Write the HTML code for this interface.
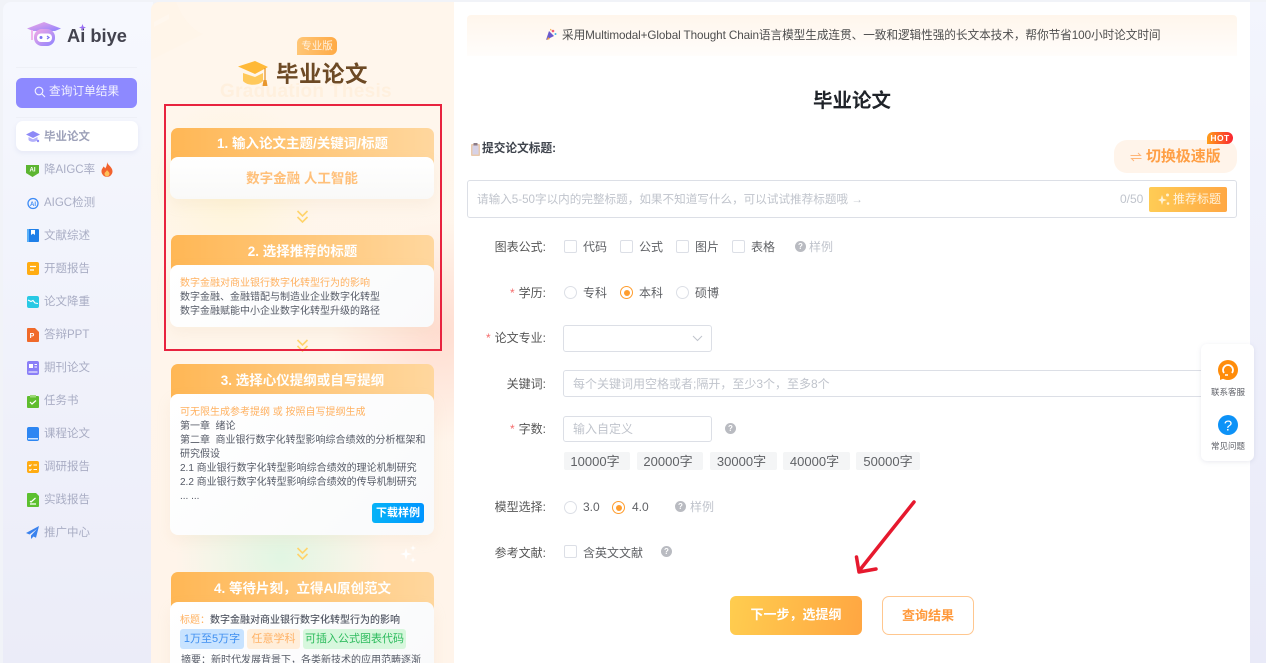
<!DOCTYPE html>
<html lang="zh"><head><meta charset="utf-8"><title>毕业论文</title>
<style>
*{box-sizing:border-box;margin:0;padding:0}
html,body{width:1266px;height:663px;overflow:hidden;background:#f1f3f8}
body{position:relative;font-family:"Liberation Sans","Noto Sans CJK SC",sans-serif;color:#555;filter:blur(.3px)}
.a{position:absolute;white-space:nowrap}
#side{position:absolute;left:3px;top:2px;width:150px;height:670px;border-radius:8px 0 0 0;background:linear-gradient(180deg,#f6f8fe,#ebecf8)}
.nav{position:absolute;left:44px;font-size:11.5px;line-height:16px;color:#a9adc4;white-space:nowrap;margin-top:1px}
#story{position:absolute;left:151px;top:2px;width:303px;height:661px;overflow:hidden;border-radius:8px 0 0 0;background:
 radial-gradient(circle at 80px 190px,rgba(255,244,200,.55),transparent 90px),
 radial-gradient(circle at 290px 330px,rgba(255,213,200,.75),transparent 110px),
 radial-gradient(circle at 130px 555px,rgba(222,246,226,.9),transparent 105px),
 linear-gradient(180deg,#fff6ec,#fff4ea)}
.head{position:absolute;left:20px;width:263px;height:50px;border-radius:7px 7px 0 0;background:linear-gradient(90deg,#ffb755,#ffd79e);color:#fff;font-size:13.5px;font-weight:700;text-align:center;line-height:34px;white-space:nowrap}
.card{position:absolute;left:19px;width:264px;border-radius:8px;background:linear-gradient(135deg,#fff,#f9fafb);box-shadow:0 6px 14px rgba(220,190,150,.13);font-size:10px;line-height:14px;color:#555a66;padding:0 10px;white-space:nowrap}
.or{color:#ffb160}
.chev{position:absolute;left:145px}
.lab{position:absolute;right:720px;font-size:12px;line-height:16px;color:#555;white-space:nowrap}
.lab i{font-style:normal;color:#f56c6c;margin-right:4px}
.cb{position:absolute;width:13px;height:13px;border:1px solid #dcdfe6;border-radius:2px;background:#fff}
.rd{position:absolute;width:13px;height:13px;border:1px solid #dcdfe6;border-radius:50%;background:#fff}
.rd.on{border-color:#ff9d2e}
.rd.on:after{content:"";position:absolute;left:2.5px;top:2.5px;width:6px;height:6px;border-radius:50%;background:#ff9d2e}
.t{position:absolute;font-size:12px;line-height:16px;color:#606266;white-space:nowrap}
.q{position:absolute;width:11px;height:11px;border-radius:50%;background:#b9bbc1;color:#fff;font-size:8px;font-weight:700;line-height:11px;text-align:center}
.box{position:absolute;background:#fff;border:1px solid #dcdfe6;border-radius:3px}
.ph{color:#c0c4cc}
.chip{position:absolute;top:452px;width:67px;height:18px;background:#f4f5f6;border-radius:2px;font-size:13px;line-height:19px;text-align:center;color:#606266;padding-right:4px}
</style></head><body>

<div id="side"></div>
<svg class="a" style="left:26px;top:21px" width="36" height="27" viewBox="0 0 36 27"><defs><linearGradient id="lg" x1="0" y1="0" x2="1" y2="1"><stop offset="0" stop-color="#f4a9e4"/><stop offset="1" stop-color="#8d82ff"/></linearGradient></defs><path d="M1 7.500 18 1l17 6.500-6 2.500H7z" fill="url(#lg)"/><rect x="5" y="9" width="2" height="10" fill="#f0b5ee"/><rect x="8" y="8" width="21" height="17" rx="8" fill="url(#lg)"/><rect x="11" y="12.500" width="15" height="8.500" rx="4" fill="#fff"/><circle cx="15" cy="16.500" r="1.500" fill="#7c73f4"/><path d="M21 15l2 1.500-2 1.500" stroke="#7c73f4" fill="none" stroke-width="1.200"/></svg>
<div class="a" style="left:67px;top:24px;font-size:18.3px;line-height:24px;font-weight:700;color:#43434f">Ai biye</div>
<svg class="a" style="left:79px;top:24px" width="7" height="7" viewBox="0 0 7 7"><path d="M3.500 0 4.400 2.600 7 3.500 4.400 4.400 3.500 7 2.600 4.400 0 3.500 2.600 2.600z" fill="#9a6ff5"/></svg>
<div class="a" style="left:16px;top:67px;width:121px;height:1px;background:#eef0f7"></div>
<div class="a" style="left:16px;top:78px;width:121px;height:30px;border-radius:6px;background:#8d89ff;color:#f3f3ff;font-size:11.7px;line-height:28px;padding-left:33px">查询订单结果</div>
<svg class="a" style="left:34px;top:86px" width="12" height="12" viewBox="0 0 12 12" fill="none" stroke="#f3f3ff" stroke-width="1.100"><circle cx="5" cy="5" r="3.800"/><path d="M8 8l3 3"/></svg>
<div class="a" style="left:16px;top:117px;width:121px;height:1px;background:#eef0f7"></div>
<div class="a" style="left:16px;top:121px;width:122px;height:30px;border-radius:7px;background:#fff;box-shadow:0 2px 5px rgba(160,165,210,.16)"></div>

<svg class="a" style="left:26px;top:130px" width="14" height="13" viewBox="0 0 14 13"><path d="M0 4.500 7 1l7 3.500-7 3.500z" fill="#8d89f7"/><path d="M2.500 7v3c2 2.500 7 2.500 9 0V7L7 9.200z" fill="#b3b0fa"/><circle cx="12" cy="11" r="1.200" fill="#8d89f7"/></svg>
<div class="nav" style="top:128px;font-weight:700;color:#9da1b9">毕业论文</div>

<svg class="a" style="left:26px;top:164px" width="13" height="13" viewBox="0 0 13 13"><path d="M0 1h13v8l-6.500 4L0 9z" fill="#5cb531"/><text x="6.500" y="7.500" font-size="6" font-weight="700" fill="#fff" text-anchor="middle" font-family="Liberation Sans">AI</text></svg>
<div class="nav" style="top:161px">降AIGC率</div>
<svg class="a" style="left:101px;top:162px" width="12" height="15" viewBox="0 0 12 15"><path d="M6 0c.5 3 5.500 5 5.500 9.300A5.500 5.500 0 0 1 .5 9.300C.5 7 2 6 2.500 4.500 3.500 5 4 6 4 6.500 5.500 5 6.200 2.500 6 0z" fill="#f2622d"/><path d="M6 8c.5 1 2.500 2 2.500 3.800a2.500 2.500 0 0 1-5 0C3.500 10.500 5.500 9.500 6 8z" fill="#ffc05a"/></svg>

<svg class="a" style="left:27px;top:197px" width="12" height="13" viewBox="0 0 12 13"><circle cx="6" cy="6.500" r="5" fill="none" stroke="#3d8bf5" stroke-width="1.300"/><text x="6" y="9" font-size="6" font-weight="700" fill="#3d8bf5" text-anchor="middle" font-family="Liberation Sans">AI</text></svg>
<div class="nav" style="top:194px">AIGC检测</div>

<svg class="a" style="left:27px;top:229px" width="12" height="13" viewBox="0 0 12 13"><rect width="12" height="13" rx="1" fill="#1f7fe8"/><rect x="0" width="2" height="13" fill="#5ab0f8"/><path d="M4 1h4v5L6 4.600 4 6z" fill="#fff"/></svg>
<div class="nav" style="top:227px">文献综述</div>

<svg class="a" style="left:27px;top:262px" width="12" height="13" viewBox="0 0 12 13"><rect width="12" height="13" rx="2" fill="#ffac12"/><path d="M3 4.500h6M3 8h4" stroke="#fff" stroke-width="1.300"/></svg>
<div class="nav" style="top:260px">开题报告</div>

<svg class="a" style="left:27px;top:296px" width="12" height="12" viewBox="0 0 12 12"><rect width="12" height="12" rx="2" fill="#28c9e4"/><path d="M1 4l3 1.500 2-1 2 2.500 3 .5" stroke="#fff" fill="none" stroke-width="1.100"/></svg>
<div class="nav" style="top:293px">论文降重</div>

<svg class="a" style="left:27px;top:328px" width="12" height="14" viewBox="0 0 12 14"><path d="M1 0h7l4 4v9a1 1 0 0 1-1 1H1a1 1 0 0 1-1-1V1a1 1 0 0 1 1-1z" fill="#f06a2a"/><text x="5" y="10" font-size="7" font-weight="700" fill="#fff" text-anchor="middle" font-family="Liberation Sans">P</text></svg>
<div class="nav" style="top:326px">答辩PPT</div>

<svg class="a" style="left:27px;top:361px" width="12" height="14" viewBox="0 0 12 14"><rect width="12" height="14" rx="2" fill="#8a7ff7"/><rect x="2" y="3" width="4" height="4" fill="#fff"/><path d="M7.500 3.500H10M7.500 6H10M1.500 11h9" stroke="#fff" stroke-width="1"/></svg>
<div class="nav" style="top:359px">期刊论文</div>

<svg class="a" style="left:27px;top:395px" width="12" height="13" viewBox="0 0 12 13"><rect y="1" width="12" height="12" rx="1" fill="#5fbd2e"/><rect x="3" width="6" height="2.500" fill="#9ed978"/><path d="M3 7l2 2 4-3.500" stroke="#fff" fill="none" stroke-width="1.200"/></svg>
<div class="nav" style="top:392px">任务书</div>

<svg class="a" style="left:27px;top:427px" width="12" height="14" viewBox="0 0 12 14"><rect width="12" height="14" rx="2" fill="#2d86f2"/><rect x="1" y="11" width="10" height="1.500" fill="#cfe5ff"/></svg>
<div class="nav" style="top:425px">课程论文</div>

<svg class="a" style="left:27px;top:461px" width="12" height="12" viewBox="0 0 12 12"><rect width="12" height="12" rx="2" fill="#ffac12"/><path d="M2 4l1 1 1.500-1.500M2 8.500l1 1 1.500-1.500M6.500 4H10M6.500 8.500H10" stroke="#fff" fill="none"/></svg>
<div class="nav" style="top:458px">调研报告</div>

<svg class="a" style="left:27px;top:493px" width="12" height="14" viewBox="0 0 12 14"><path d="M1 0h8l3 3v10a1 1 0 0 1-1 1H1a1 1 0 0 1-1-1V1a1 1 0 0 1 1-1z" fill="#5cc02f"/><path d="M3 8l1 1 4.500-4M3 11h6" stroke="#fff" fill="none" stroke-width="1.200"/></svg>
<div class="nav" style="top:491px">实践报告</div>

<svg class="a" style="left:26px;top:526px" width="13" height="13" viewBox="0 0 13 13"><path d="M13 0 0 7l3.500 1.500L11 3 5 9.500V13l2.500-2.500 2.500 1.200z" fill="#3a82ee"/></svg>
<div class="nav" style="top:524px">推广中心</div>

<div id="story">
  <svg class="a" style="left:0;top:0" width="60" height="60" viewBox="0 0 60 60"><path d="M0 8Q0 0 8 0H25Q35 25 52 32L0 58z" fill="#fff1e2" opacity=".3"/><path d="M3 20 18 12v5L3 25z" fill="#fff" opacity=".25"/></svg>
  <div class="a" style="left:146px;top:35px;width:40px;height:18px;border-radius:6px 6px 6px 0;background:linear-gradient(90deg,#ffc676,#ffaa45);color:#fff2e0;font-size:10.5px;line-height:18px;text-align:center">专业版</div>
  <div class="a" style="left:69px;top:78px;font-size:19px;line-height:24px;font-weight:700;color:#fff0de;letter-spacing:.3px">Graduation Thesis</div>
  <svg class="a" style="left:87px;top:58px" width="31" height="29" viewBox="0 0 31 29"><path d="M0 6.500 17 1l13 6-13 7z" fill="#ffb938"/><path d="M5 13v8c4 5 16 5 20 0v-8l-8 4z" fill="#ffc95c"/><path d="M27 8v12" stroke="#e8962c" stroke-width="1.300"/><path d="M25.500 20h3l1 6h-5z" fill="#e8962c"/></svg>
  <div class="a" style="left:125px;top:57px;font-size:22.5px;line-height:32px;font-weight:700;color:#6d4a25;letter-spacing:.5px">毕业论文</div>

  <div class="head" style="top:126px;line-height:32px">1. 输入论文主题/关键词/标题</div>
  <div class="card" style="top:155px;height:42px;text-align:center;line-height:43px;font-size:13.5px;font-weight:700;color:#ffc07a;background:linear-gradient(180deg,#fff,#f9f9f8)">数字金融 人工智能</div>
  <svg class="chev" style="top:208px" width="13" height="14" viewBox="0 0 13 14" fill="none" stroke="#ffd46b" stroke-width="1.600"><path d="M1.500 1l5 5 5-5M1.500 7l5 5 5-5"/></svg>

  <div class="head" style="top:233px">2. 选择推荐的标题</div>
  <div class="card" style="top:263px;height:62px;padding-top:12px"><span class="or">数字金融对商业银行数字化转型行为的影响</span><br>数字金融、金融错配与制造业企业数字化转型<br>数字金融赋能中小企业数字化转型升级的路径</div>
  <svg class="chev" style="top:337px" width="13" height="14" viewBox="0 0 13 14" fill="none" stroke="#ffd46b" stroke-width="1.600"><path d="M1.500 1l5 5 5-5M1.500 7l5 5 5-5"/></svg>

  <div class="head" style="top:362px">3. 选择心仪提纲或自写提纲</div>
  <div class="card" style="top:392px;height:141px;padding-top:12px"><span class="or">可无限生成参考提纲 或 按照自写提纲生成</span><br>第一章&nbsp;&nbsp;绪论<br>第二章&nbsp;&nbsp;商业银行数字化转型影响综合绩效的分析框架和<br>研究假设<br>2.1 商业银行数字化转型影响综合绩效的理论机制研究<br>2.2&nbsp;商业银行数字化转型影响综合绩效的传导机制研究<br>... ...</div>
  <div class="a" style="left:221px;top:501px;width:52px;height:20px;border-radius:3px;background:linear-gradient(90deg,#07b3f7,#0095ff);color:#fff;font-size:11px;font-weight:700;line-height:20px;text-align:center">下载样例</div>
  <svg class="chev" style="top:545px" width="13" height="14" viewBox="0 0 13 14" fill="none" stroke="#ffd46b" stroke-width="1.600"><path d="M1.500 1l5 5 5-5M1.500 7l5 5 5-5"/></svg>
  <svg class="a" style="left:248px;top:543px" width="18" height="18" viewBox="0 0 18 18" fill="#fff"><path d="M7 3 8.300 7.700 13 9 8.300 10.300 7 15 5.700 10.300 1 9 5.700 7.700z"/><path d="M14 0l.7 2.300L17 3l-2.300.7L14 6l-.7-2.300L11 3l2.300-.7zM14 12l.7 2.300L17 15l-2.300.7L14 18l-.7-2.300L11 15l2.300-.7z"/></svg>

  <div class="head" style="top:570px">4. 等待片刻，立得AI原创范文</div>
  <div class="card" style="top:600px;height:70px;padding-top:12px;line-height:14px;border-radius:8px 8px 0 0"><span class="or">标题：</span><b style="font-weight:500">数字金融对商业银行数字化转型行为的影响</b></div>
  <div class="a" style="left:29px;top:627px;width:64px;height:20px;border-radius:3px;background:#c8e3ff;color:#3f8ff0;font-size:11px;line-height:20px;text-align:center">1万至5万字</div>
  <div class="a" style="left:96px;top:627px;width:53px;height:20px;border-radius:3px;background:#ffeeda;color:#ffb266;font-size:11px;line-height:20px;text-align:center">任意学科</div>
  <div class="a" style="left:152px;top:627px;width:103px;height:20px;border-radius:3px;background:#d7f7dd;color:#2dbb5d;font-size:11px;line-height:20px;text-align:center">可插入公式图表代码</div>
  <div class="a" style="left:30px;top:652px;font-size:10px;line-height:14px;color:#555a66">摘要：新时代发展背景下，各类新技术的应用范畴逐渐</div>
</div>

<div class="a" style="left:164px;top:104px;width:278px;height:247px;border:2px solid #e8233f"></div>

<div class="a" style="left:454px;top:2px;width:796px;height:661px;background:#fff"></div>
<div class="a" style="left:1250px;top:2px;width:16px;height:661px;background:linear-gradient(180deg,#f3f5fd,#e9eaf8)"></div>

<div class="a" style="left:467px;top:15px;width:770px;height:41px;border-radius:4px 4px 0 0;background:linear-gradient(180deg,#fff6ec,#fffdfb)"></div>
<svg class="a" style="left:545px;top:28px" width="12" height="13" viewBox="0 0 12 13"><path d="M1 12 4 3l5 5z" fill="#6a5acd"/><path d="M3 9l2 2-3 1z" fill="#f2a33c"/><circle cx="8" cy="3" r="1.300" fill="#f25e7a"/><circle cx="10.500" cy="6" r="1" fill="#42b7e8"/><path d="M5.500 1l.7 1.500" stroke="#f2a33c"/></svg>
<div class="a" style="left:562px;top:28px;font-size:11.7px;line-height:16px;color:#4e4e4e;letter-spacing:-.1px">采用Multimodal+Global Thought Chain语言模型生成连贯、一致和逻辑性强的长文本技术，帮你节省100小时论文时间</div>

<div class="a" style="left:813px;top:88px;font-size:19.5px;line-height:26px;font-weight:700;color:#1f2329">毕业论文</div>

<svg class="a" style="left:470px;top:143px" width="11" height="13" viewBox="0 0 11 13"><rect x="1" y="1" width="9" height="12" rx="1" fill="#e9c9ad"/><rect x="2.500" y="2.500" width="6" height="9" fill="#d7d2e6"/><rect x="3.500" y="0" width="4" height="2.500" fill="#8b7b86"/></svg>
<div class="a" style="left:482px;top:141px;font-size:11.7px;line-height:16px;font-weight:700;color:#3e434c">提交论文标题:</div>

<div class="a" style="left:1114px;top:140px;width:123px;height:33px;border-radius:13px;background:#fff4ea;color:#ff9f45;font-size:15px;font-weight:700;line-height:33px;padding-left:32px;letter-spacing:-.1px">切换极速版</div>
<svg class="a" style="left:1130px;top:151px" width="12" height="12" viewBox="0 0 12 12" fill="none" stroke="#ffb678" stroke-width="1"><path d="M0.500 4.500h10L8 2M11.500 7.500h-10L4 10"/></svg>
<div class="a" style="left:1207px;top:132px;width:26px;height:12px;border-radius:7px 7px 7px 0;background:linear-gradient(90deg,#ffa01c,#fa2430);color:#fff;font-size:8.5px;font-weight:700;line-height:12px;text-align:center;letter-spacing:.4px">HOT</div>

<div class="box" style="left:467px;top:180px;width:770px;height:38px"></div>
<div class="a ph" style="left:477px;top:192px;font-size:11.6px;line-height:16px">请输入5-50字以内的完整标题，如果不知道写什么，可以试试推荐标题哦 →</div>
<div class="a ph" style="left:1120px;top:191px;font-size:12px;line-height:16px">0/50</div>
<div class="a" style="left:1149px;top:187px;width:78px;height:25px;border-radius:2px;background:linear-gradient(90deg,#ffcc55,#ffa844);color:#fff3dc;font-size:12px;line-height:24px;padding-left:24px">推荐标题</div>
<svg class="a" style="left:1158px;top:193px" width="12" height="12" viewBox="0 0 12 12" fill="#fff1cf"><path d="M4 2 5.200 5.800 9 7 5.200 8.200 4 12 2.800 8.200 0 7 2.800 5.800z"/><circle cx="9.500" cy="2" r="1.500"/><circle cx="10" cy="10.500" r="1.300"/></svg>

<div class="lab" style="top:239px">图表公式:</div>
<div class="cb" style="left:564px;top:240px"></div><div class="t" style="left:583px;top:239px">代码</div>
<div class="cb" style="left:620px;top:240px"></div><div class="t" style="left:639px;top:239px">公式</div>
<div class="cb" style="left:676px;top:240px"></div><div class="t" style="left:695px;top:239px">图片</div>
<div class="cb" style="left:732px;top:240px"></div><div class="t" style="left:751px;top:239px">表格</div>
<div class="q" style="left:795px;top:241px">?</div><div class="t ph" style="left:809px;top:239px;color:#c0c4cc">样例</div>

<div class="lab" style="top:285px"><i>*</i>学历:</div>
<div class="rd" style="left:564px;top:286px"></div><div class="t" style="left:583px;top:285px">专科</div>
<div class="rd on" style="left:620px;top:286px"></div><div class="t" style="left:639px;top:285px">本科</div>
<div class="rd" style="left:676px;top:286px"></div><div class="t" style="left:695px;top:285px">硕博</div>

<div class="lab" style="top:330px"><i>*</i>论文专业:</div>
<div class="box" style="left:563px;top:325px;width:149px;height:27px"></div>
<svg class="a" style="left:692px;top:335px" width="11" height="7" viewBox="0 0 11 7" fill="none" stroke="#c0c4cc"><path d="M1 1l4.500 4.500L10 1"/></svg>

<div class="lab" style="top:376px">关键词:</div>
<div class="box" style="left:563px;top:370px;width:674px;height:27px"></div>
<div class="a ph" style="left:573px;top:376px;font-size:12px;line-height:16px">每个关键词用空格或者;隔开，至少3个，至多8个</div>

<div class="lab" style="top:421px"><i>*</i>字数:</div>
<div class="box" style="left:563px;top:416px;width:149px;height:26px"></div>
<div class="a ph" style="left:573px;top:421px;font-size:12px;line-height:16px">输入自定义</div>
<div class="q" style="left:725px;top:423px">?</div>
<div class="chip" style="left:564px;width:66px">10000字</div>
<div class="chip" style="left:637px;width:66px">20000字</div>
<div class="chip" style="left:710px">30000字</div>
<div class="chip" style="left:783px">40000字</div>
<div class="chip" style="left:856px;width:64px;padding-right:0">50000字</div>

<div class="lab" style="top:499px">模型选择:</div>
<div class="rd" style="left:564px;top:501px"></div><div class="t" style="left:583px;top:499px">3.0</div>
<div class="rd on" style="left:612px;top:501px"></div><div class="t" style="left:632px;top:499px">4.0</div>
<div class="q" style="left:675px;top:501px">?</div><div class="t" style="left:690px;top:499px;color:#c0c4cc">样例</div>

<div class="lab" style="top:545px">参考文献:</div>
<div class="cb" style="left:564px;top:545px"></div><div class="t" style="left:583px;top:545px">含英文文献</div>
<div class="q" style="left:661px;top:546px">?</div>

<svg class="a" style="left:850px;top:495px" width="72" height="85" viewBox="0 0 72 85" fill="none" stroke="#e6192e" stroke-width="3.500" stroke-linecap="round" stroke-linejoin="round"><path d="M64 7 9 76M6.500 62 9 77l17-3"/></svg>

<div class="a" style="left:730px;top:596px;width:132px;height:39px;border-radius:6px;background:linear-gradient(100deg,#ffcd4f,#ffa642);color:#fff;font-size:13px;font-weight:700;line-height:37px;text-align:center">下一步，选提纲</div>
<div class="a" style="left:882px;top:596px;width:92px;height:39px;border-radius:7px;border:1px solid #ffc78f;background:#fff;color:#ff9a3d;font-size:13px;font-weight:700;line-height:37px;text-align:center">查询结果</div>

<div class="a" style="left:1201px;top:344px;width:53px;height:117px;border-radius:6px;background:#fff;box-shadow:0 1px 5px rgba(120,125,160,.16)"></div>
<svg class="a" style="left:1218px;top:360px" width="20" height="21" viewBox="0 0 20 21"><circle cx="10" cy="10" r="10" fill="#ff8c0a"/><path d="M2 14v6l5-2z" fill="#ff8c0a"/><path d="M6 13a5 5 0 1 1 8 0" stroke="#fff" stroke-width="1.800" fill="none"/><path d="M7 15h3" stroke="#fff" stroke-width="1.500"/></svg>
<div class="a" style="left:1211px;top:386px;font-size:8.5px;line-height:12px;color:#5f6168">联系客服</div>
<svg class="a" style="left:1218px;top:415px" width="20" height="20" viewBox="0 0 20 20"><circle cx="10" cy="10" r="10" fill="#0d92f7"/><text x="10" y="15.500" font-size="15" fill="#fff" text-anchor="middle" font-family="Liberation Sans">?</text></svg>
<div class="a" style="left:1211px;top:440px;font-size:8.5px;line-height:12px;color:#5f6168">常见问题</div>
</body></html>
